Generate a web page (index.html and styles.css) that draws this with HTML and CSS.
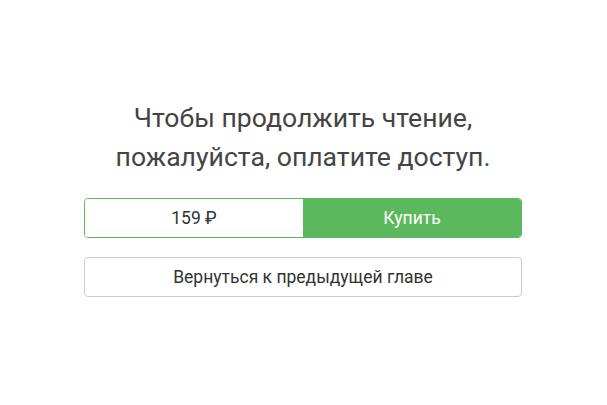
FILE: index.html
```html
<!DOCTYPE html>
<html lang="ru">
<head>
    <meta charset="UTF-8">
    <meta name="viewport" content="width=device-width, initial-scale=1.0">
    <title>Оплата главы</title>
    <link rel="stylesheet" href="styles.css">
</head>
<body>

<main class="paywall">
    <h2 class="paywall-title">Чтобы продолжить чтение, пожалуйста, оплатите доступ.</h2>

    <div class="buy-group">
        <span class="buy-price">159 ₽</span>
        <button class="buy-button" type="button">Купить</button>
    </div>

    <button class="back-button" type="button">Вернуться к предыдущей главе</button>
</main>

</body>
</html>
```

FILE: styles.css
```css
body {
    font-family: Roboto, "Liberation Sans", sans-serif;
    margin: 0;
    padding: 0 1px 0 0;
    background-color: #fff;
    color: #333;
}
.paywall {
    width: 438px;
    margin: 0 auto;
    padding-top: 98px;
    text-align: center;
}
.paywall-title {
    margin: 0 0 22px;
    font-size: 26.6px;
    font-weight: 400;
    line-height: 39px;
    color: #444;
}
.buy-group {
    display: flex;
    height: 40px;
    border: 1px solid #5cb85c;
    border-radius: 4px;
    overflow: hidden;
    box-sizing: border-box;
}
.buy-price,
.buy-button {
    flex: 1 1 0;
    display: flex;
    align-items: center;
    justify-content: center;
    padding: 0;
    font-family: inherit;
    font-size: 17.5px;
}
.buy-price {
    background: #fff;
    color: #333;
}
.buy-button {
    border: 0;
    background: #5cb85c;
    color: #fff;
    cursor: pointer;
}
.back-button {
    display: block;
    width: 100%;
    height: 40px;
    margin-top: 19px;
    border: 1px solid #ccc;
    border-radius: 4px;
    background: #fff;
    color: #333;
    font-family: inherit;
    font-size: 17.5px;
    cursor: pointer;
}
```
